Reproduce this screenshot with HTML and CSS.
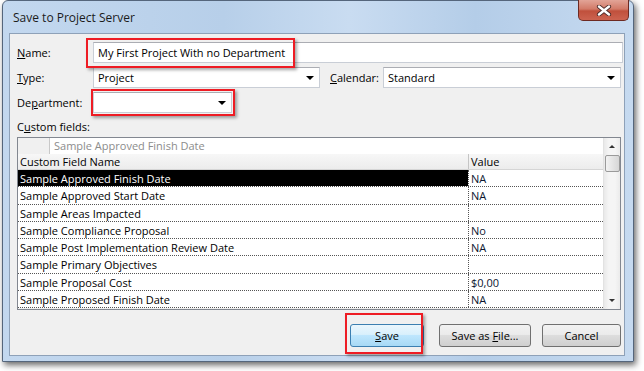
FILE: index.html
```html
<!DOCTYPE html>
<html lang="en">
<head>
  <meta charset="UTF-8" />
  <title>Save to Project Server</title>
  <link rel="stylesheet" href="styles.css">
</head>
<body>

<div class="window">
  <!-- Title bar -->
  <div class="titlebar">
    <span class="title">Save to Project Server</span>
    <span class="close">
      <svg width="16" height="11" viewBox="0 0 16 11">
        <path d="M3 1.5 L13 9.5 M13 1.5 L3 9.5" stroke="#4a2a28" stroke-width="4.2" stroke-linecap="round"/>
        <path d="M3 1.5 L13 9.5 M13 1.5 L3 9.5" stroke="#ffffff" stroke-width="2.4" stroke-linecap="round"/>
      </svg>
    </span>
  </div>

  <!-- Dialog body -->
  <div class="client">
    <div class="form">
      <label><u>N</u>ame:</label>
      <div class="field text-field">My First Project With no Department</div>

      <label><u>T</u>ype:</label>
      <div class="field-row">
        <div class="field combo combo-type"><span>Project</span><i class="arrow"></i></div>
        <label class="cal-label"><u>C</u>alendar:</label>
        <div class="field combo combo-cal"><span>Standard</span><i class="arrow"></i></div>
      </div>

      <label>De<u>p</u>artment:</label>
      <div class="field combo combo-dept"><span></span><i class="arrow"></i></div>
    </div>

    <div class="cf-label">C<u>u</u>stom fields:</div>

    <div class="grid">
      <div class="grid-main">
        <div class="edit-row">
          <span class="edit-stub"></span>
          <span class="edit-text">Sample Approved Finish Date</span>
        </div>
        <div class="head-row">
          <span class="c-name">Custom Field Name</span>
          <span class="c-val">Value</span>
        </div>
        <div class="row selected"><span class="c-name">Sample Approved Finish Date</span><span class="c-val">NA</span></div>
        <div class="row"><span class="c-name">Sample Approved Start Date</span><span class="c-val">NA</span></div>
        <div class="row"><span class="c-name">Sample Areas Impacted</span><span class="c-val"></span></div>
        <div class="row"><span class="c-name">Sample Compliance Proposal</span><span class="c-val">No</span></div>
        <div class="row"><span class="c-name">Sample Post Implementation Review Date</span><span class="c-val">NA</span></div>
        <div class="row"><span class="c-name">Sample Primary Objectives</span><span class="c-val"></span></div>
        <div class="row"><span class="c-name">Sample Proposal Cost</span><span class="c-val">$0,00</span></div>
        <div class="row"><span class="c-name">Sample Proposed Finish Date</span><span class="c-val">NA</span></div>
      </div>
      <div class="scrollbar">
        <span class="sb-arrow up"></span>
        <span class="sb-thumb"></span>
        <span class="sb-track"></span>
        <span class="sb-arrow down"></span>
      </div>
    </div>

    <div class="buttons">
      <button class="btn btn-default"><u>S</u>ave</button>
      <button class="btn btn-file">Save as <u>F</u>ile...</button>
      <button class="btn btn-cancel">Cancel</button>
    </div>
  </div>

  <!-- Red annotation boxes -->
  <div class="mark mark-name"></div>
  <div class="mark mark-dept"></div>
  <div class="mark mark-save"></div>
</div>

</body>
</html>
```

FILE: styles.css
```css
* {
  box-sizing: border-box;
}
body {
  margin: 0;
  width: 644px;
  height: 371px;
  overflow: hidden;
  background: #ffffff;
  font-family: 'Open Sans', 'Noto Sans', sans-serif;
  font-size: 11px;
  color: #000;
}
u {
  text-decoration: underline;
  text-underline-offset: 1px;
}

/* window frame */
.window {
  position: relative;
  margin-left: 2px;
  width: 632px;
  height: 362px;
  border: 1px solid #55667c;
  border-radius: 6px 6px 0 0;
  background: linear-gradient(90deg, #c3d8ef 0%, #b7cfe9 35%, #c9dcf1 55%, #b4cde8 75%, #c6daf0 100%);
  box-shadow: 2px 3px 6px rgba(0, 0, 0, 0.6);
  padding: 0 8px 6px 6px;
}
.titlebar {
  height: 32px;
  display: flex;
  justify-content: space-between;
  align-items: flex-start;
}
.title {
  margin: 8px 0 0 4px;
  font-size: 12px;
  color: #1b1b1b;
}
.close {
  width: 51px;
  height: 21px;
  margin-right: -4px;
  margin-top: -1px;
  border: 1px solid #6d2a22;
  border-top: none;
  border-radius: 0 0 5px 5px;
  background: linear-gradient(#e2a497 0%, #d27a68 45%, #c0503c 55%, #cc6350 100%);
  display: flex;
  align-items: center;
  justify-content: center;
}

/* client area */
.client {
  height: 323px;
  background: #f0f0f0;
  border: 1px solid #8ea1b8;
  padding: 8px 3px 0 7px;
}
.form {
  display: grid;
  grid-template-columns: 76px 1fr;
  row-gap: 4px;
  align-items: center;
}
.form label {
  line-height: 15px;
}
.field {
  height: 21px;
  background: #fff;
  border: 1px solid #c9ced6;
  border-top-color: #abadb3;
  display: flex;
  align-items: center;
  padding-left: 4px;
}
.text-field {
  margin-right: -2px;
}
.field-row {
  display: flex;
  align-items: center;
}
.combo {
  justify-content: space-between;
  padding-right: 5px;
}
.combo-type {
  width: 227px;
}
.cal-label {
  width: 63px;
  padding-left: 10px;
}
.combo-cal {
  flex: 1;
}
.combo-dept {
  width: 139px;
}
.arrow {
  width: 0;
  height: 0;
  border-left: 4px solid transparent;
  border-right: 4px solid transparent;
  border-top: 4px solid #000;
}

.cf-label {
  margin-top: 6px;
  line-height: 15px;
}

/* custom fields grid */
.grid {
  margin-top: 3px;
  height: 173px;
  border: 1px solid #828790;
  background: #f0f0f0;
  display: flex;
}
.grid-main {
  flex: 1;
}
.edit-row {
  height: 16px;
  display: flex;
  background: #fff;
}
.edit-stub {
  width: 32px;
  background: #f0f0f0;
  border-right: 1px solid #c8c8c8;
}
.edit-text {
  padding-left: 4px;
  color: #8c8c8c;
  line-height: 16px;
}
.head-row,
.row {
  display: flex;
  height: 17.25px;
  line-height: 17px;
}
.head-row {
  height: 16px;
  line-height: 16px;
  background: linear-gradient(#f7f7f7, #ececec);
  border-bottom: 1px solid #d5d5d5;
}
.head-row .c-val {
  border-left: 1px solid #c5c5c5;
}
.c-name {
  width: 450px;
  padding-left: 2px;
  white-space: nowrap;
}
.c-val {
  flex: 1;
  padding-left: 2px;
}
.row {
  background: #fff;
  border-bottom: 1px dotted #555;
}
.row .c-val {
  border-left: 1px dotted #555;
  color: #0c1630;
}
.row.selected .c-name {
  background: #000;
  color: #fff;
}

.scrollbar {
  width: 17px;
  display: flex;
  flex-direction: column;
  align-items: center;
  background: linear-gradient(90deg, #e9e9e9, #f5f5f5 30%, #f5f5f5 70%, #ebebeb);
  border-left: 1px solid #e2e2e2;
}
.sb-arrow {
  height: 17px;
  width: 100%;
  display: flex;
  align-items: center;
  justify-content: center;
}
.sb-arrow::before {
  content: "";
  border-left: 3px solid transparent;
  border-right: 3px solid transparent;
}
.sb-arrow.up::before {
  border-bottom: 3px solid #333;
}
.sb-arrow.down::before {
  border-top: 3px solid #333;
}
.sb-thumb {
  width: 15px;
  height: 17px;
  border: 1px solid #9a9a9a;
  border-radius: 2px;
  background: linear-gradient(90deg, #f2f2f2, #e4e4e4 50%, #d6d6d6);
}
.sb-track {
  flex: 1;
}

/* buttons */
.buttons {
  margin-top: 14px;
  display: flex;
  justify-content: flex-end;
}
.btn {
  height: 23px;
  font-family: inherit;
  font-size: 11px;
  color: #000;
  border: 1px solid #707070;
  border-radius: 3px;
  background: linear-gradient(#f2f2f2 0%, #ebebeb 45%, #dddddd 50%, #cfcfcf 100%);
  padding: 0;
}
.btn-default {
  width: 74px;
  margin-right: 15px;
  border-color: #3c7fb1;
  background: linear-gradient(#eaf6fd 0%, #d9f0fc 45%, #bee6fd 50%, #a7d9f5 100%);
}
.btn-file {
  width: 92px;
  margin-right: 11px;
}
.btn-cancel {
  width: 79px;
}

/* red annotation boxes */
.mark {
  position: absolute;
  border: 2px solid #ee1c24;
  box-shadow: 2px 2px 3px rgba(0, 0, 0, 0.35);
}
.mark-name {
  left: 83px;
  top: 37px;
  width: 209px;
  height: 30px;
}
.mark-dept {
  left: 88px;
  top: 88px;
  width: 144px;
  height: 27px;
}
.mark-save {
  left: 342px;
  top: 312px;
  width: 78px;
  height: 41px;
}
```
